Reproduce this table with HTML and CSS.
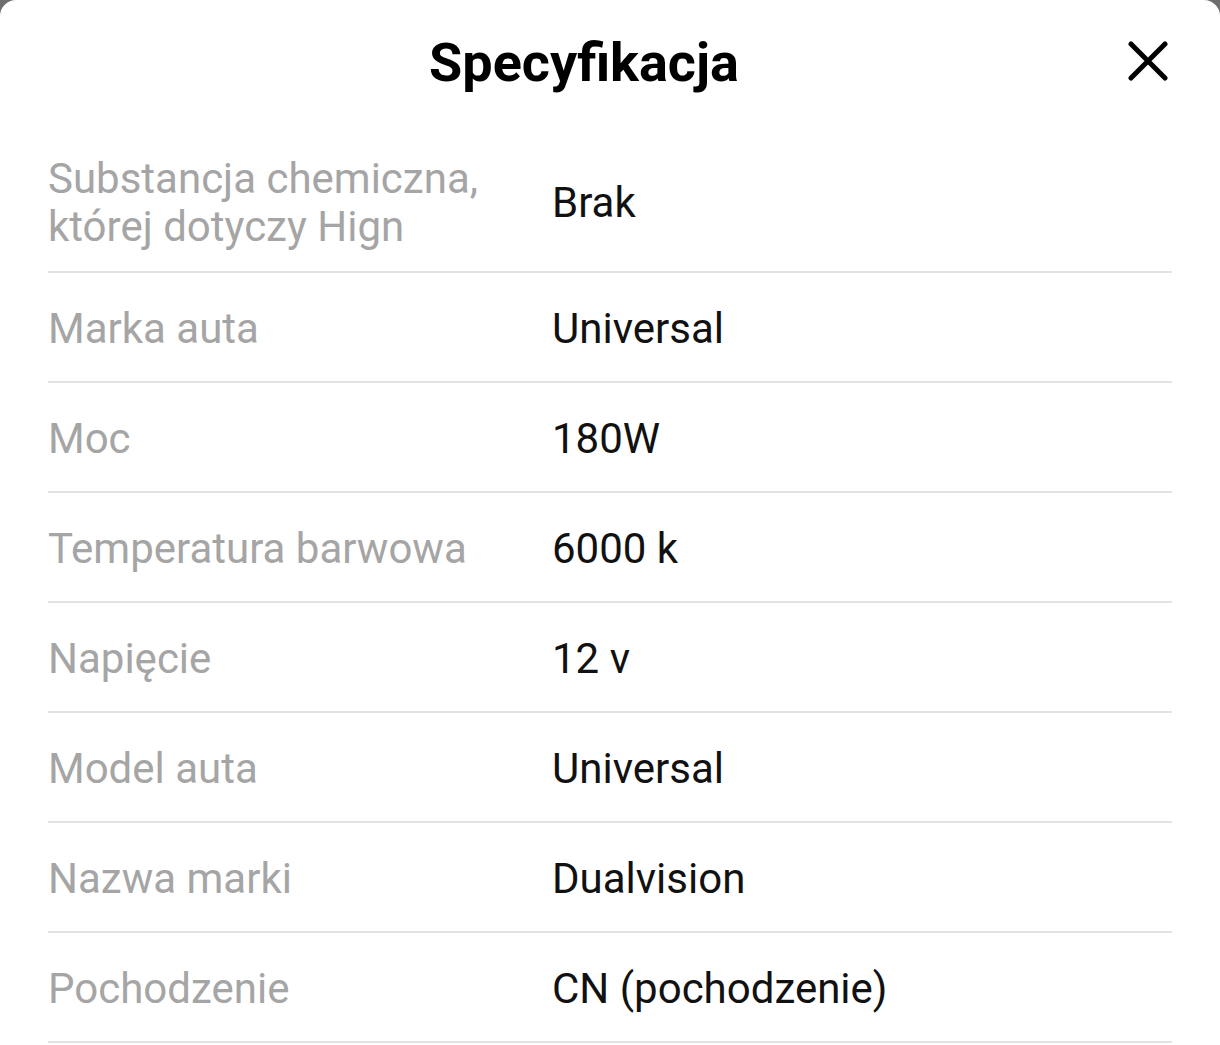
FILE: index.html
```html
<!DOCTYPE html>
<html lang="pl">
<head>
<meta charset="utf-8">
<title>Specyfikacja</title>
<link rel="stylesheet" href="styles.css">
</head>
<body>
<div class="sheet">
  <header class="header">
    <div></div>
    <h1 class="title">Specyfikacja</h1>
    <button class="close" aria-label="Zamknij">
      <svg width="40" height="40" viewBox="0 0 40 40"><path d="M3 3 L37 37 M37 3 L3 37" stroke="#000" stroke-width="5" stroke-linecap="round" fill="none"/></svg>
    </button>
  </header>
  <dl class="specs">
    <div class="row row-first"><dt>Substancja chemiczna, której dotyczy Hign</dt><dd>Brak</dd></div>
    <div class="row"><dt>Marka auta</dt><dd>Universal</dd></div>
    <div class="row"><dt>Moc</dt><dd>180W</dd></div>
    <div class="row"><dt>Temperatura barwowa</dt><dd>6000 k</dd></div>
    <div class="row"><dt>Napięcie</dt><dd>12 v</dd></div>
    <div class="row"><dt>Model auta</dt><dd>Universal</dd></div>
    <div class="row"><dt>Nazwa marki</dt><dd>Dualvision</dd></div>
    <div class="row"><dt>Pochodzenie</dt><dd>CN (pochodzenie)</dd></div>
  </dl>
</div>
</body>
</html>
```
FILE: styles.css
```css
html, body {
  margin: 0;
  padding: 0;
  background: #6e6e6e;
  height: 100%;
  overflow: hidden;
}
.sheet {
  background: #fff;
  border-radius: 16px 16px 0 0;
  min-height: 100%;
  font-family: Roboto, "Liberation Sans", sans-serif;
  padding: 0 48px;
  box-sizing: border-box;
}
.header {
  display: grid;
  grid-template-columns: 1fr auto 1fr;
  align-items: start;
  height: 123px;
  box-sizing: border-box;
  padding-top: 28px;
}
.title {
  margin: 0 52px 0 0;
  font-size: 54px;
  line-height: 70px;
  font-weight: 700;
  color: #000;
  letter-spacing: 0;
}
.close {
  justify-self: end;
  margin-top: 13px;
  margin-right: 4px;
  width: 40px;
  height: 40px;
  padding: 0;
  border: 0;
  background: none;
  display: flex;
}
.specs {
  margin: 0;
}
.row {
  display: grid;
  grid-template-columns: 504px 1fr;
  align-items: center;
  padding: 32px 0 28px;
  border-bottom: 2px solid #e2e2e2;
  font-size: 42px;
  line-height: 48px;
}
.row-first {
  padding-bottom: 20px;
}
.row dt {
  color: #a5a5a5;
  padding-right: 40px;
}
.row dd {
  margin: 0;
  color: #111;
}
```
